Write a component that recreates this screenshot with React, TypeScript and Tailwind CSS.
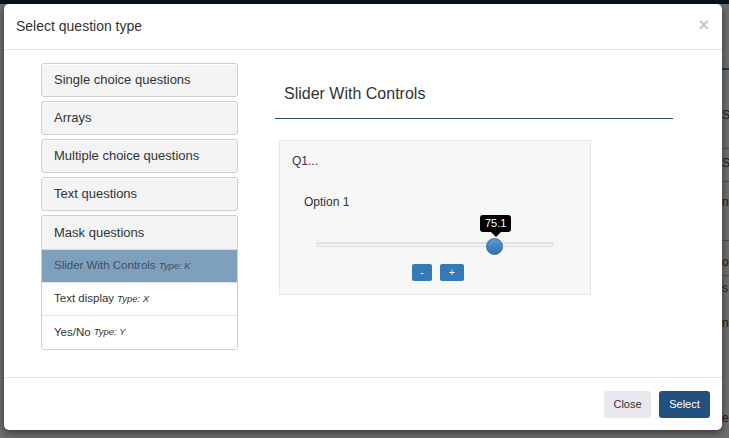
const font = { fontFamily: '"Liberation Sans", Arial, sans-serif' };

const groups = ["Single choice questions", "Arrays", "Multiple choice questions", "Text questions"];

const maskItems = [
  { label: "Slider With Controls", type: "K", active: true },
  { label: "Text display", type: "X", active: false },
  { label: "Yes/No", type: "Y", active: false },
];

// fragments of the page behind the dark overlay, seen at the right edge
const behindRows = [
  { h: 64, pt: 0, text: "", line: "" },
  { h: 32, pt: 0, text: "", line: "border-t-2 border-[#22384f]" },
  { h: 48, pt: 8, text: "S", line: "" },
  { h: 33, pt: 7, text: "S", line: "border-t border-[#505050]" },
  { h: 59, pt: 13, text: "n", line: "border-t border-[#505050]" },
  { h: 35, pt: 14, text: "or", line: "border-t border-[#505050]" },
  { h: 35, pt: 5, text: "s", line: "border-t border-[#505050]" },
  { h: 100, pt: 6, text: "n", line: "" },
  { h: 28, pt: 1, text: "ec", line: "" },
];

function GroupButton({ label }: { label: string }) {
  return (
    <div className="h-[34px] flex items-center px-[12px] border border-[#cfcfcf] rounded-[3px] bg-[#f4f4f4] text-[13px] text-[#333] shadow-[inset_0_1px_0_#fff]">
      {label}
    </div>
  );
}

function SliderPreview() {
  return (
    <div className="mt-[21px] ml-[4px] w-[312px] h-[155px] border border-[#e6e6e6] bg-[#f7f7f7] pt-[13px] pl-[12px]">
      <div className="text-[12px] text-[#333] leading-[14px]">Q1...</div>
      <div className="mt-[27px] ml-[12px] text-[12px] text-[#333] leading-[14px]">Option 1</div>
      <div className="relative mt-[6px] ml-[24px] w-[238px] h-[49px]">
        <div className="absolute left-[164px] top-0 flex flex-col items-center">
          <div className="bg-black text-white text-[11px] leading-[17px] px-[5px] rounded-[3px]">75.1</div>
          <div className="w-0 h-0 border-x-[5px] border-x-transparent border-t-[5px] border-t-black" />
        </div>
        <div className="absolute left-0 right-0 top-[27px] h-[5px] rounded-full bg-[#f2f2f2] border border-[#e0e0e0] shadow-[inset_0_1px_1px_rgba(0,0,0,0.08)]" />
        <div className="absolute left-[170px] top-[23px] w-[17px] h-[17px] rounded-full bg-gradient-to-b from-[#5a9ad6] to-[#2f71b0] border border-[#2d6ca8]" />
      </div>
      <div className="flex justify-center gap-[8px] pr-[6px]">
        <button className="w-[20px] h-[17px] rounded-[2px] bg-[#337ab7] text-white text-[10px] leading-[17px]">-</button>
        <button className="w-[24px] h-[17px] rounded-[2px] bg-[#337ab7] text-white text-[10px] leading-[17px]">+</button>
      </div>
    </div>
  );
}

function Underlay() {
  return (
    <div className="absolute inset-0 bg-[#6f6f6f] flex flex-col">
      <div className="h-[4px] bg-[#08121b]" />
      <div className="flex-1 flex">
        <div className="flex-1" />
        <div className="w-[7px] flex flex-col">
          {behindRows.map((r, i) => (
            <div
              key={i}
              className={`shrink-0 text-[12px] leading-[14px] text-[#1a1a1a] ${r.line}`}
              style={{ height: r.h, paddingTop: r.pt }}
            >
              {r.text}
            </div>
          ))}
        </div>
      </div>
    </div>
  );
}

export default function App() {
  return (
    <div className="relative w-[729px] h-[438px] overflow-hidden" style={font}>
      <Underlay />
      <div className="relative ml-[4px] mt-[4px] w-[718px] h-[426px] bg-white rounded-[5px] shadow-[0_3px_9px_rgba(0,0,0,0.5)] flex flex-col">
        <div className="h-[46px] border-b border-[#e5e5e5] flex items-center justify-between px-[12px]">
          <h4 className="text-[14px] text-[#333]">Select question type</h4>
          <span className="text-[18px] font-bold text-[#c8c8c8] leading-none -mt-[4px] mr-[1px]">×</span>
        </div>
        <div className="flex-1 flex pt-[13px]">
          <div className="ml-[37px] w-[197px] flex flex-col gap-[4px]">
            {groups.map((g) => (
              <GroupButton key={g} label={g} />
            ))}
            <div className="border border-[#cfcfcf] rounded-[3px] overflow-hidden">
              <div className="h-[34px] flex items-center px-[12px] bg-[#f4f4f4] text-[13px] text-[#333] border-b border-[#d8d8d8]">
                Mask questions
              </div>
              {maskItems.map((it) => (
                <div
                  key={it.label}
                  className={`h-[33px] flex items-center px-[12px] text-[11.5px] border-b last:border-b-0 border-[#e2e2e2] ${
                    it.active ? "bg-[#7f9fbe] text-[#3d4f61]" : "bg-white text-[#333]"
                  }`}
                >
                  {it.label}
                  <i className="ml-[3px] text-[9.5px]">Type: {it.type}</i>
                </div>
              ))}
            </div>
          </div>
          <div className="ml-[37px] w-[398px] pt-[19px]">
            <div className="pl-[9px] text-[16px] text-[#333] leading-[24px] h-[37px] border-b border-[#2b4d6f]">
              Slider With Controls
            </div>
            <SliderPreview />
          </div>
        </div>
        <div className="h-[53px] border-t border-[#e5e5e5] flex items-center justify-end gap-[8px] pr-[12px]">
          <button className="w-[47px] h-[27px] rounded-[3px] bg-[#e8e8ee] text-[11px] text-[#333]">Close</button>
          <button className="w-[51px] h-[27px] rounded-[3px] bg-[#23507e] text-[11px] text-white">Select</button>
        </div>
      </div>
    </div>
  );
}
